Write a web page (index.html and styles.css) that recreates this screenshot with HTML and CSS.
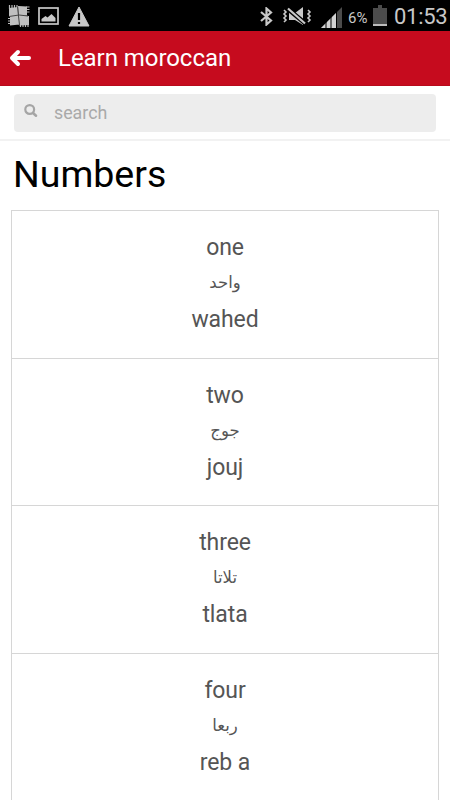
FILE: index.html
```html
<!DOCTYPE html>
<html lang="en">
<head>
    <meta charset="UTF-8">
    <meta name="viewport" content="width=device-width, initial-scale=1.0">
    <title>Learn moroccan</title>
    <link rel="stylesheet" href="styles.css">
</head>
<body>
    <div class="statusbar">
        <div class="status-left">
            <svg class="icon-app" width="22" height="22" viewBox="0 0 22 22">
                <path d="M1.500 0v4M4 0v4M6.500 0v4M9 0v4M18 2h3.500M18 4.500h3.500M18 7h3.500M0 13.500h4M0 16h4M0 18.500h4M12.500 18v4M15 18v4M17.500 18v4M20 18v4" stroke="#b8b8b8" stroke-width="1.2" />
                <path d="M1 3l9-1 .500 9-9.500 .500zM10 1l9 .500v9l-8 .500zM2 11l9-.500 .500 9-9.500 1zM11 10.500l10 .500v9l-9.500 .500z" fill="#c0c0c0" />
                <path d="M9.500 2l2 18M1 11.500l10-1.500 9 1" fill="none" stroke="#444" stroke-width="1" />
            </svg>
            <svg class="icon-image" width="21" height="18" viewBox="0 0 21 18">
                <rect x="1" y="1" width="19" height="16" fill="none" stroke="#c8c8c8" stroke-width="1.7" />
                <path d="M3.500 14.500v-2.500l4-3 2 1.500 4-3.500 4 4v3.500z" fill="#c8c8c8" />
            </svg>
            <svg class="icon-warning" width="22" height="21" viewBox="0 0 22 21">
                <path d="M11 1L21 20H1z" fill="#c8c8c8" stroke="#c8c8c8" stroke-linejoin="round" />
                <path d="M11 7v7M11 16v2" stroke="#000" stroke-width="2.2" />
            </svg>
        </div>
        <div class="status-right">
            <svg class="icon-bluetooth" width="13" height="19" viewBox="0 0 13 19">
                <path d="M1 5l10 8.500-4.500 4V1.500l4.500 4L1 14" fill="none" stroke="#c8c8c8" stroke-width="2.200" />
            </svg>
            <svg class="icon-mute" width="30" height="18" viewBox="0 0 30 18">
                <path d="M7 6h6l8-6v18l-8-5H7z" fill="#c8c8c8" />
                <path d="M6 2l18 15" stroke="#000" stroke-width="4.600" />
                <path d="M6 1.500l17 15" stroke="#c8c8c8" stroke-width="2.200" />
                <path d="M2 3l2 2-2 2 2 2-2 2 2 2-2 2M26 3l2 2-2 2 2 2-2 2 2 2-2 2" fill="none" stroke="#c8c8c8" stroke-width="1.600" />
            </svg>
            <svg class="icon-signal" width="21" height="21" viewBox="0 0 21 21">
                <path d="M0 21L21 0v21z" fill="#4b4b4b" />
                <path d="M0 21L15 6v15z" fill="#d2d2d2" />
                <path d="M5 0v21M10 0v21M15.500 0v21" stroke="#000" stroke-width="1" />
            </svg>
            <span class="battery-level">6%</span>
            <svg class="icon-battery" width="14" height="21" viewBox="0 0 14 21">
                <path d="M0 3h5V0h4v3h5v18H0z" fill="#4b4b4b" />
                <path d="M0 19h14v2H0z" fill="#bbb" />
            </svg>
            <span class="clock">01:53</span>
        </div>
    </div>

    <header>
        <svg class="icon-back" width="22" height="18" viewBox="0 0 22 18">
            <path d="M9 3L3 9l6 6M3.500 9H20" fill="none" stroke="#fff" stroke-width="4" stroke-linecap="round" stroke-linejoin="round" />
        </svg>
        <h3>Learn moroccan</h3>
    </header>

    <div class="searchbar">
        <label class="searchbox">
            <svg class="icon-search" width="14" height="14" viewBox="0 0 14 14">
                <circle cx="5.700" cy="5.500" r="4.400" fill="none" stroke="#a5a5a5" stroke-width="2.200" />
                <path d="M9 9l3 2.700" stroke="#a5a5a5" stroke-width="2.600" stroke-linecap="round" />
            </svg>
            <input type="text" placeholder="search">
        </label>
    </div>

    <section>
        <h1>Numbers</h1>
        <ul class="word-list">
            <li>
                <p>one</p>
                <p class="arabic" lang="ar">واحد</p>
                <p>wahed</p>
            </li>
            <li>
                <p>two</p>
                <p class="arabic" lang="ar">جوج</p>
                <p>jouj</p>
            </li>
            <li>
                <p>three</p>
                <p class="arabic" lang="ar">تلاتا</p>
                <p>tlata</p>
            </li>
            <li>
                <p>four</p>
                <p class="arabic" lang="ar">ربعا</p>
                <p>reb a</p>
            </li>
        </ul>
    </section>
</body>
</html>
```
FILE: styles.css
```css
* {
    padding: 0;
    margin: 0;
    box-sizing: border-box;
}

body {
    height: 100vh;
    overflow: hidden;
    background: #fff;
    font-family: Roboto, "Liberation Sans", sans-serif;
}

svg {
    display: block;
    flex: none;
}

.statusbar {
    height: 31px;
    padding: 0 4px 0 8px;
    display: flex;
    justify-content: space-between;
    background: #000;
    color: #c8c8c8;
}

.status-left,
.status-right {
    display: flex;
    align-items: flex-start;
}

.icon-app {
    margin-top: 5px;
}

.icon-image {
    margin: 7px 0 0 8px;
}

.icon-warning {
    margin: 6px 0 0 9px;
}

.icon-bluetooth {
    margin-top: 7px;
}

.icon-mute {
    margin: 7px 0 0 9px;
}

.icon-signal {
    margin: 7px 0 0 9px;
}

.battery-level {
    width: 20px;
    margin: 8px 0 0 6px;
    font-size: 15px;
    line-height: 20px;
    white-space: nowrap;
}

.icon-battery {
    margin: 5px 0 0 5px;
}

.clock {
    width: 52px;
    margin-left: 7px;
    font-size: 22px;
    line-height: 33px;
    white-space: nowrap;
    letter-spacing: -.3px;
}

header {
    height: 55px;
    padding-left: 9px;
    display: flex;
    align-items: center;
    background: #c60b1e;
    border-bottom: 1px solid #b80a1b;
    color: #fff;
}

header h3 {
    margin-left: 27px;
    font-size: 24px;
    font-weight: 400;
    line-height: 30px;
    letter-spacing: -.05px;
}

.searchbar {
    height: 55px;
    padding: 8px 14px 0;
    border-bottom: 2px solid #f2f2f2;
}

.searchbox {
    height: 38px;
    padding-left: 10px;
    display: flex;
    align-items: center;
    background: #ededed;
    border-radius: 4px;
}

.icon-search {
    margin-bottom: 4px;
}

.searchbox input {
    flex: 1;
    margin: 0 0 1px 16px;
    border: 0;
    outline: 0;
    background: none;
    font-family: inherit;
    font-size: 17.8px;
}

.searchbox input::placeholder {
    color: #a9a9a9;
}

section {
    padding: 10px 11px 0;
}

h1 {
    height: 59px;
    padding-left: 2px;
    font-size: 37.5px;
    font-weight: 400;
    line-height: 47px;
}

.word-list {
    list-style: none;
    border: 1px solid #d6d6d6;
}

.word-list li {
    height: 147.5px;
    padding-top: 19px;
    border-bottom: 1px solid #d6d6d6;
    text-align: center;
    font-size: 23px;
    line-height: 36px;
    letter-spacing: -.1px;
    color: #555;
}

.word-list .arabic {
    font-family: "DejaVu Sans", sans-serif;
    font-size: 16.5px;
    line-height: 34px;
    letter-spacing: 0;
    margin-bottom: 2px;
}
```
